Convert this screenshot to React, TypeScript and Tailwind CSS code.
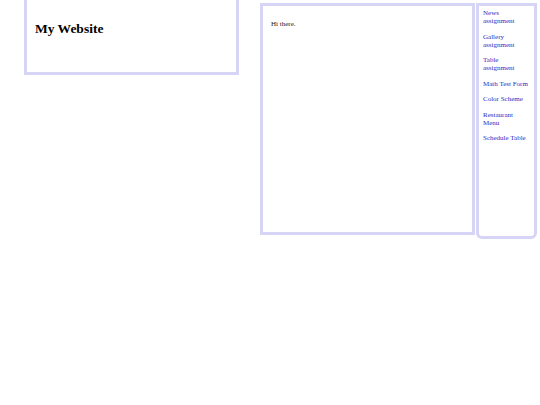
const links = [
  "News assignment",
  "Gallery assignment",
  "Table assignment",
  "Math Test Form",
  "Color Scheme",
  "Restaurant Menu",
  "Schedule Table",
];

export default function App() {
  return (
    <div className="flex items-start pl-[24px] font-['Liberation_Serif',serif] text-black">
      <header className="w-[215px] h-[75px] border-x-[3px] border-b-[3px] border-[#d7d5f6] pl-[8px] pt-[21px]">
        <h1 className="text-[13.5px] font-bold leading-[16px]">My Website</h1>
      </header>
      <div className="ml-[21px] mt-[3px] flex items-start">
        <main className="w-[215px] h-[232px] border-[3px] border-[#d7d5f6] pl-[8px] pt-[14px]">
          <p className="text-[7px] leading-[8px] text-[#222]">Hi there.</p>
        </main>
        <nav className="ml-[1px] w-[61px] h-[236px] border-[3px] border-[#d7d5f6] rounded-b-[6px] pl-[4px] pr-[5px] pt-[3px]">
          <ul className="flex flex-col gap-[7.5px]">
            {links.map((l) => (
              <li key={l}>
                <a href="#" className="block text-[7px] leading-[8px] text-[#2c2cc4]">
                  {l}
                </a>
              </li>
            ))}
          </ul>
        </nav>
      </div>
    </div>
  );
}
